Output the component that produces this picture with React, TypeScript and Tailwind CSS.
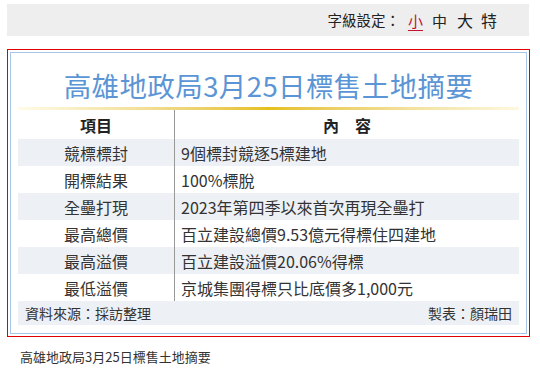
import React from "react";

const rows: [string, string][] = [
  ["競標標封", "9個標封競逐5標建地"],
  ["開標結果", "100%標脫"],
  ["全壘打現", "2023年第四季以來首次再現全壘打"],
  ["最高總價", "百立建設總價9.53億元得標住四建地"],
  ["最高溢價", "百立建設溢價20.06%得標"],
  ["最低溢價", "京城集團得標只比底價多1,000元"],
];

export default function App() {
  return (
    <div
      className="w-[540px] h-[378px] bg-white overflow-hidden"
      style={{ fontFamily: '"Noto Sans CJK TC", "Noto Sans", sans-serif' }}
    >
      <div className="ml-[7px] mt-[4px] w-[522px] h-[32px] bg-[#eeeeee] flex items-center justify-end pr-[32px] text-[#222]">
        <span className="text-[14.5px] leading-none">字級設定：</span>
        <span className="ml-[8px] text-[15px] leading-none text-[#c8102e] underline underline-offset-[3px]">小</span>
        <span className="ml-[9px] text-[15px] leading-none">中</span>
        <span className="ml-[10px] text-[16px] leading-none">大</span>
        <span className="ml-[8px] text-[16px] leading-none">特</span>
      </div>

      <div className="ml-[7px] mt-[13px] w-[523px] h-[288px] border border-[#e00000] p-[2px]">
        <div className="w-full h-full border border-[#a8c6e8] flex flex-col px-[7px]">
          <div className="h-[54px] flex items-end justify-center pb-[8px]">
            <span className="text-[27.5px] leading-none text-[#5b95d5] tracking-[0.4px]">
              高雄地政局3月25日標售土地摘要
            </span>
          </div>
          <div className="h-[3px] w-full bg-gradient-to-r from-[#fffbe8] via-[#e6c018] to-[#fdf8e0]" />
          <div className="flex flex-col text-[16px] text-[#333]">
            <div className="flex h-[29px]">
              <div className="w-[157px] flex items-center justify-center font-semibold text-[#222] border-r border-[#999]">
                項目
              </div>
              <div className="flex-1 flex items-center justify-center font-semibold text-[#222]">
                內　容
              </div>
            </div>
            {rows.map(([k, v], i) => (
              <div
                key={k}
                className={`flex h-[27px] ${i % 2 === 0 ? "bg-[#edf0f5]" : "bg-white"}`}
              >
                <div className="w-[157px] flex items-center justify-center border-r border-[#999]">
                  {k}
                </div>
                <div className="flex-1 flex items-center pl-[6px]">{v}</div>
              </div>
            ))}
            <div className="flex h-[24px] bg-[#edf0f5] items-center justify-between px-[7px] text-[14px] text-[#333]">
              <span>資料來源：採訪整理</span>
              <span>製表：顏瑞田</span>
            </div>
          </div>
        </div>
      </div>

      <div className="ml-[20px] mt-[13px] text-[13px] leading-none text-[#333]">
        高雄地政局3月25日標售土地摘要
      </div>
    </div>
  );
}
